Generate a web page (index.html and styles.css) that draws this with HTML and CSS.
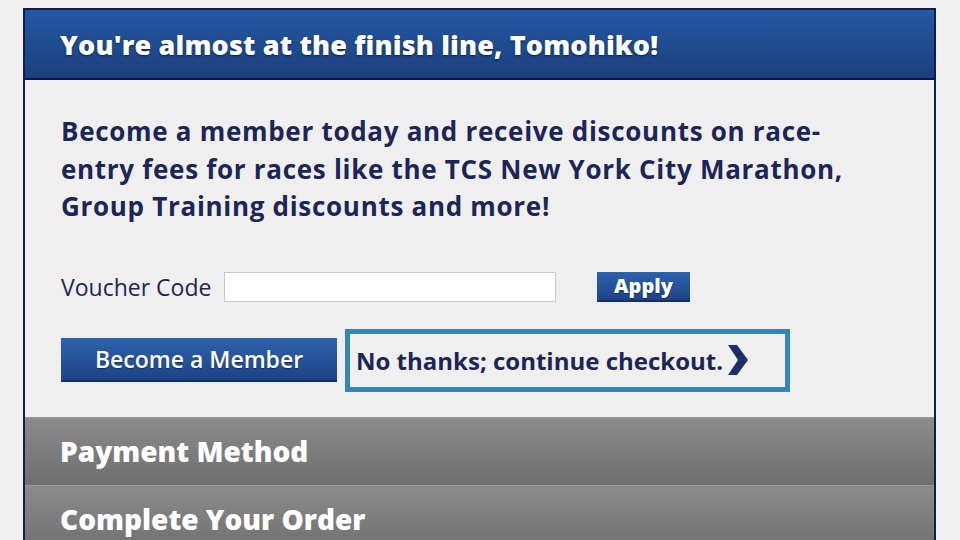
FILE: index.html
```html
<!DOCTYPE html>
<html lang="en">
<head>
  <meta charset="UTF-8">
  <meta name="viewport" content="width=device-width, initial-scale=1.0">
  <title>Checkout</title>
  <link rel="stylesheet" href="styles.css">
</head>
<body>
  <div class="panel">
    <header class="panel-header">
      <h1>You're almost at the finish line, Tomohiko!</h1>
    </header>

    <div class="panel-body">
      <p class="promo">Become a member today and receive discounts on race-entry fees for races like the TCS New York City Marathon, Group Training discounts and more!</p>

      <form class="voucher">
        <label for="voucher">Voucher Code</label>
        <input type="text" id="voucher" name="voucher">
        <button type="button" class="btn-apply">Apply</button>
      </form>

      <div class="actions">
        <button type="button" class="btn-member">Become a Member</button>
        <a href="#" class="skip">
          No thanks; continue checkout.
          <svg class="chevron" width="22" height="32" viewBox="0 0 22 32">
            <polygon points="1,1 10,1 21,16 10,31 1,31 11,16" fill="#1d2f66"/>
          </svg>
        </a>
      </div>
    </div>

    <div class="step">Payment Method</div>
    <div class="step">Complete Your Order</div>
  </div>
</body>
</html>
```

FILE: styles.css
```css
body {
  margin: 0;
  padding: 0;
  background-color: #efefef;
  font-family: "Open Sans", Lato, sans-serif;
}

.panel {
  margin: 8px 0 0 23px;
  width: 913px;
  height: 600px;
  box-sizing: border-box;
  border: 2px solid #121d4c;
  border-bottom: none;
  background-color: #efefef;
}

.panel-header {
  height: 68px;
  display: flex;
  align-items: center;
  padding-left: 35px;
  background: linear-gradient(#2459a4, #1b3f7e);
  border-bottom: 2px solid #0f1945;
}

.panel-header h1 {
  margin: 0;
  color: #fff;
  font-size: 27px;
  font-weight: 800;
  letter-spacing: 0.15px;
  text-shadow: 0 1px 2px rgba(0, 0, 0, 0.6);
}

.panel-body {
  padding: 33px 36px 25px;
}

.promo {
  margin: 0;
  color: #1c2557;
  font-size: 26px;
  font-weight: 700;
  letter-spacing: 0.7px;
  line-height: 37.5px;
  width: 800px;
}

.voucher {
  display: flex;
  align-items: center;
  margin-top: 45px;
}

.voucher label {
  width: 155px;
  color: #1c2557;
  font-size: 23px;
  white-space: nowrap;
}

.voucher input {
  width: 332px;
  height: 30px;
  box-sizing: border-box;
  margin-left: 8px;
  border: 1px solid #c9c9c9;
  background-color: #fff;
}

.btn-apply {
  margin-left: 41px;
  width: 93px;
  height: 30px;
  padding: 0;
  border: none;
  border-bottom: 2px solid #14306a;
  background: linear-gradient(#2d62ad, #1d4487);
  color: #fff;
  font-family: inherit;
  font-size: 20px;
  font-weight: 800;
  text-shadow: 0 1px 1px rgba(0, 0, 0, 0.5);
}

.actions {
  display: flex;
  align-items: center;
  gap: 8px;
  margin-top: 26px;
}

.btn-member {
  width: 276px;
  height: 44px;
  padding: 0;
  border: none;
  border-bottom: 2px solid #14306a;
  background: linear-gradient(#2d62ad, #1d4487);
  color: #fff;
  font-family: inherit;
  font-size: 23px;
  font-weight: 600;
  text-shadow: 0 1px 1px rgba(0, 0, 0, 0.4);
}

.skip {
  display: flex;
  align-items: center;
  width: 445px;
  height: 63px;
  box-sizing: border-box;
  padding-left: 6px;
  border: 5px solid #3586b3;
  color: #1c2557;
  font-size: 24px;
  font-weight: 700;
  text-decoration: none;
}

.chevron {
  margin-left: 4px;
}

.step {
  height: 68px;
  display: flex;
  align-items: center;
  padding-left: 35px;
  background: linear-gradient(#8b8b8b, #6f6f6f);
  border-top: 1px solid #999;
  box-sizing: border-box;
  color: #fff;
  font-size: 28px;
  font-weight: 800;
}
```
